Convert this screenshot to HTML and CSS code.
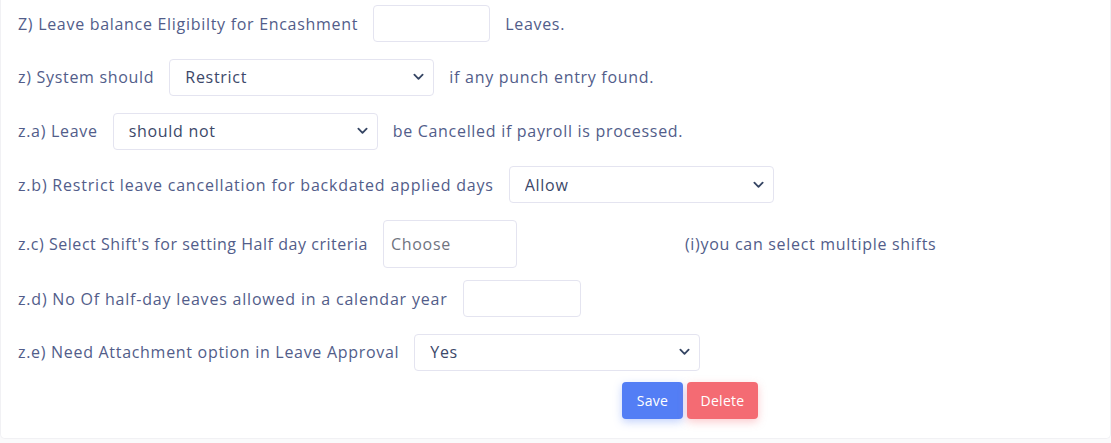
FILE: index.html
```html
<!DOCTYPE html>
<html>
<head>
<meta charset="utf-8">
<link rel="stylesheet" href="styles.css">
</head>
<body>
<div class="card">
  <div class="row r1">
    <label class="lbl">Z) Leave balance Eligibilty for Encashment</label>
    <input class="ctl in-1" type="text">
    <span class="after">Leaves.</span>
  </div>
  <div class="row r2">
    <label class="lbl">z) System should</label>
    <select class="ctl sel sel-1"><option>Restrict</option></select>
    <span class="after">if any punch entry found.</span>
  </div>
  <div class="row r3">
    <label class="lbl">z.a) Leave</label>
    <select class="ctl sel sel-1"><option>should not</option></select>
    <span class="after">be Cancelled if payroll is processed.</span>
  </div>
  <div class="row r4">
    <label class="lbl lbl-wide">z.b) Restrict leave cancellation for backdated applied days</label>
    <select class="ctl sel sel-1"><option>Allow</option></select>
  </div>
  <div class="row r5">
    <label class="lbl lbl-tight">z.c) Select Shift's for setting Half day criteria</label>
    <div class="ctl multi">Choose</div>
    <span class="hint">(i)you can select multiple shifts</span>
  </div>
  <div class="row r6">
    <label class="lbl lbl-wide">z.d) No Of half-day leaves allowed in a calendar year</label>
    <input class="ctl in-1" type="text">
  </div>
  <div class="row r7">
    <label class="lbl">z.e) Need Attachment option in Leave Approval</label>
    <select class="ctl sel sel-2"><option>Yes</option></select>
  </div>
  <div class="actions">
    <button class="btn btn-save">Save</button>
    <button class="btn btn-del">Delete</button>
  </div>
</div>
</body>
</html>
```

FILE: styles.css
```css
html, body {
  margin: 0;
  padding: 0;
  background: #fafafb;
}
body {
  font-family: "Open Sans", "Noto Sans", sans-serif;
  font-size: 16px;
  letter-spacing: 0.7px;
  color: #525d8a;
}
.card {
  width: 1111px;
  height: 439px;
  background: #fff;
  border: 1px solid #f1f1f4;
  border-top: none;
  border-radius: 0 0 5px 5px;
  padding: 5px 17px 0 17px;
  box-sizing: border-box;
}
.row {
  display: flex;
  align-items: center;
  margin-bottom: 16.8px;
}
.lbl {
  margin-right: 15px;
  white-space: nowrap;
}
.lbl-wide { letter-spacing: 0.8px; }
.lbl-tight { letter-spacing: 0.54px; }
.ctl {
  height: 37px;
  box-sizing: border-box;
  border: 1px solid #e4e4f0;
  border-radius: 4px;
  background: #fff;
  font-family: inherit;
  font-size: 16px;
  letter-spacing: 0.7px;
  color: #3c4869;
  outline: none;
}
.in-1 { width: 117px; }
.r6 .in-1 { width: 118px; }
.sel {
  -webkit-appearance: none;
  appearance: none;
  padding: 0 30px 0 15px;
  background-image: url("data:image/svg+xml;utf8,<svg xmlns='http://www.w3.org/2000/svg' width='12' height='8' viewBox='0 0 12 8'><path d='M1.5 1.5 L6 6 L10.5 1.5' fill='none' stroke='%23354563' stroke-width='2' stroke-linecap='round' stroke-linejoin='round'/></svg>");
  background-repeat: no-repeat;
  background-position: right 9px center;
  background-size: 11px 8px;
}
.sel-1 { width: 265px; }
.sel-2 { width: 286px; }
.after { margin-left: 15px; }
.r5 { margin-bottom: 12px; }
.multi {
  width: 134px;
  height: 48px;
  display: flex;
  align-items: center;
  padding-left: 7px;
  color: #70747f;
}
.hint { margin-left: 168px; }
.actions {
  display: flex;
  gap: 4px;
  padding-left: 604px;
  margin-top: -6px;
}
.btn {
  height: 37px;
  border: none;
  border-radius: 4px;
  color: #fff;
  font-family: inherit;
  font-size: 14px;
  font-weight: 500;
  letter-spacing: 0.3px;
  padding: 0;
}
.btn-save {
  width: 61px;
  background: #537ef5;
  box-shadow: 0 3px 8px rgba(83, 126, 245, 0.35);
}
.btn-del {
  width: 71px;
  background: #f46b73;
  box-shadow: 0 3px 8px rgba(244, 107, 115, 0.35);
}
```
